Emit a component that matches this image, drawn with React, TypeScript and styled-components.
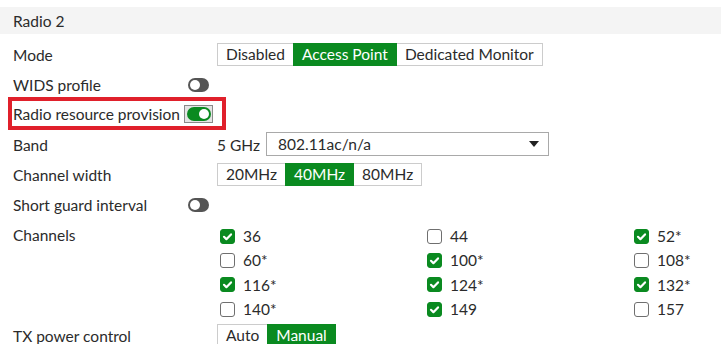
import styled, { createGlobalStyle } from 'styled-components'

const GREEN = '#0a8a20'

const GlobalStyle = createGlobalStyle`
	body {
		margin: 0;
		background: #fff;
		font-family: Lato, "Open Sans", sans-serif;
		color: #2b2b2b;
	}
`

const Panel = styled.div`
	width: 721px;
	padding-top: 7px;
	font-size: 15.5px;
	overflow: hidden;
`

const SectionHeader = styled.div`
	height: 27px;
	background: #f4f4f4;
	display: flex;
	align-items: center;
	padding-left: 13px;
	margin-bottom: 6px;
`

const Form = styled.div`
	display: flex;
	flex-direction: column;
	padding-left: 13px;
`

const Row = styled.div<{ $top?: boolean }>`
	display: flex;
	align-items: ${(p) => (p.$top ? 'flex-start' : 'center')};
	min-height: 30px;
`

const Label = styled.div<{ $width?: number }>`
	width: ${(p) => p.$width ?? 204}px;
	flex-shrink: 0;
	line-height: 30px;
	white-space: nowrap;
`

const Highlight = styled.div`
	display: flex;
	align-items: center;
	width: 209px;
	height: 25px;
	margin: 1px 0 4px -1px;
	padding-left: 1px;
	outline: 4px solid #e0202b;
`

const ToggleFrame = styled.div`
	display: flex;
	align-items: center;
	justify-content: center;
	width: 27px;
	height: 16px;
	border: 1px solid #8a8a8a;
	background: #e4e4e4;
`

const Toggle = styled.span<{ $on?: boolean }>`
	position: relative;
	display: inline-block;
	width: ${(p) => (p.$on ? 24 : 21)}px;
	height: 14px;
	border-radius: 7px;
	background: ${(p) => (p.$on ? GREEN : '#555')};

	&::after {
		content: '';
		position: absolute;
		top: 2px;
		left: ${(p) => (p.$on ? 12 : 2)}px;
		width: 10px;
		height: 10px;
		border-radius: 50%;
		background: #fff;
	}
`

const Segmented = styled.div`
	display: flex;
	height: 23px;
	margin-bottom: 2px;
`

const Segment = styled.div<{ $active?: boolean }>`
	display: flex;
	align-items: center;
	padding: 0 8px;
	margin-left: -1px;
	border: 1px solid ${(p) => (p.$active ? GREEN : '#ccc')};
	background: ${(p) => (p.$active ? GREEN : '#fff')};
	color: ${(p) => (p.$active ? '#fff' : '#2b2b2b')};
	position: relative;
	z-index: ${(p) => (p.$active ? 1 : 0)};

	&:first-child {
		margin-left: 0;
	}
`

const BandText = styled.span`
	width: 49px;
	flex-shrink: 0;
`

const Select = styled.div`
	display: flex;
	align-items: center;
	justify-content: space-between;
	box-sizing: border-box;
	width: 283px;
	height: 24px;
	padding: 0 9px 0 11px;
	border: 1px solid #a9a9a9;
	margin-bottom: 3px;
`

const Caret = styled.span`
	width: 0;
	height: 0;
	border-left: 5.5px solid transparent;
	border-right: 5.5px solid transparent;
	border-top: 6px solid #222;
`

const ChannelGrid = styled.div`
	display: grid;
	grid-template-columns: 207px 207px 80px;
	grid-auto-rows: 24.3px;
	padding: 4px 0 0 3px;
`

const Channel = styled.label`
	display: flex;
	align-items: center;
	gap: 8px;
`

const Box = styled.span<{ $checked?: boolean }>`
	display: inline-flex;
	align-items: center;
	justify-content: center;
	box-sizing: border-box;
	width: 15px;
	height: 15px;
	border-radius: 3px;
	border: 1px solid ${(p) => (p.$checked ? GREEN : '#6f6f6f')};
	background: ${(p) => (p.$checked ? GREEN : '#fff')};
`

const channels: [string, boolean][] = [
	['36', true],
	['44', false],
	['52*', true],
	['60*', false],
	['100*', true],
	['108*', false],
	['116*', true],
	['124*', true],
	['132*', true],
	['140*', false],
	['149', true],
	['157', false],
]

const Check = ({ checked }: { checked: boolean }) => (
	<Box $checked={checked}>
		{checked && (
			<svg width="11" height="11" viewBox="0 0 11 11" aria-hidden="true">
				<path d="M2 5.8l2.4 2.4L9 3.4" fill="none" stroke="#fff" strokeWidth="2.2" strokeLinecap="round" strokeLinejoin="round" />
			</svg>
		)}
	</Box>
)

const SegmentGroup = ({ items, active }: { items: string[]; active: string }) => (
	<Segmented>
		{items.map((it) => (
			<Segment key={it} $active={it === active}>
				{it}
			</Segment>
		))}
	</Segmented>
)

export default function App() {
	return (
		<>
			<GlobalStyle />
			<Panel>
				<SectionHeader>Radio 2</SectionHeader>
				<Form>
					<Row>
						<Label>Mode</Label>
						<SegmentGroup items={['Disabled', 'Access Point', 'Dedicated Monitor']} active="Access Point" />
					</Row>
					<Row>
						<Label $width={175}>WIDS profile</Label>
						<Toggle />
					</Row>
					<Row>
						<Highlight>
							<Label $width={171}>Radio resource provision</Label>
							<ToggleFrame>
								<Toggle $on />
							</ToggleFrame>
						</Highlight>
					</Row>
					<Row>
						<Label>Band</Label>
						<BandText>5 GHz</BandText>
						<Select>
							<span>802.11ac/n/a</span>
							<Caret />
						</Select>
					</Row>
					<Row>
						<Label>Channel width</Label>
						<SegmentGroup items={['20MHz', '40MHz', '80MHz']} active="40MHz" />
					</Row>
					<Row>
						<Label $width={175}>Short guard interval</Label>
						<Toggle />
					</Row>
					<Row $top>
						<Label>Channels</Label>
						<ChannelGrid>
							{channels.map(([name, on]) => (
								<Channel key={name}>
									<Check checked={on} />
									{name}
								</Channel>
							))}
						</ChannelGrid>
					</Row>
					<Row>
						<Label>TX power control</Label>
						<SegmentGroup items={['Auto', 'Manual']} active="Manual" />
					</Row>
				</Form>
			</Panel>
		</>
	)
}
